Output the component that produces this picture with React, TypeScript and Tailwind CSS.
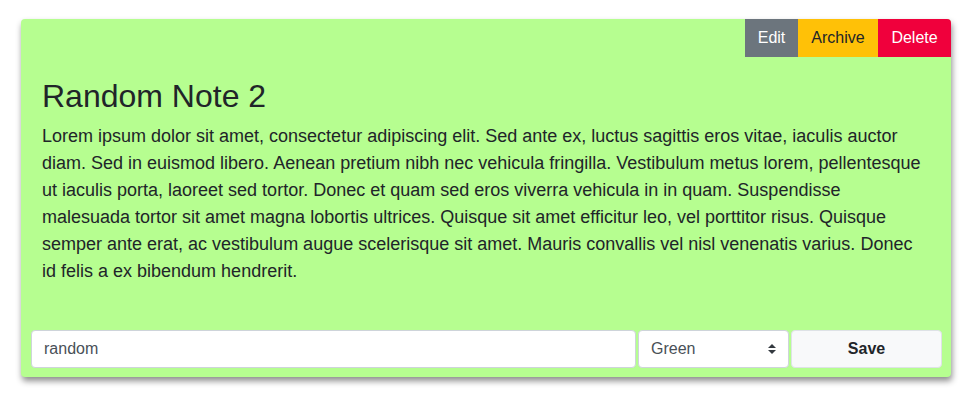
import { useState } from "react";

const body =
  "Lorem ipsum dolor sit amet, consectetur adipiscing elit. Sed ante ex, luctus sagittis eros vitae, iaculis auctor diam. Sed in euismod libero. Aenean pretium nibh nec vehicula fringilla. Vestibulum metus lorem, pellentesque ut iaculis porta, laoreet sed tortor. Donec et quam sed eros viverra vehicula in in quam. Suspendisse malesuada tortor sit amet magna lobortis ultrices. Quisque sit amet efficitur leo, vel porttitor risus. Quisque semper ante erat, ac vestibulum augue scelerisque sit amet. Mauris convallis vel nisl venenatis varius. Donec id felis a ex bibendum hendrerit.";

export default function App() {
  const [tag, setTag] = useState("random");
  const [color, setColor] = useState("Green");

  return (
    <div className="min-h-[407px] bg-white pt-[19px] font-['Liberation_Sans',Arial,sans-serif] text-[#212529]">
      <div className="ml-[21px] flex w-[930px] flex-col rounded-[4px] bg-[#b6fe90] shadow-[1px_4px_6px_rgba(0,0,0,0.45)]">
        <div className="flex justify-end">
          <button className="h-[38px] w-[53px] bg-[#6c757d] text-[16px] text-white">Edit</button>
          <button className="h-[38px] w-[80px] bg-[#ffc107] text-[16px] text-[#212529]">Archive</button>
          <button className="h-[38px] w-[73px] rounded-tr-[4px] bg-[#f0003c] text-[16px] text-white">
            Delete
          </button>
        </div>

        <div className="px-[21px] pt-[20px]">
          <h2 className="mb-[8px] text-[32px] leading-[38px] font-medium">Random Note 2</h2>
          <p className="text-[18px] leading-[27px]">{body}</p>
        </div>

        <div className="mt-[45px] flex gap-[2px] pr-[9px] pb-[9px] pl-[10px]">
          <input
            value={tag}
            onChange={(e) => setTag(e.target.value)}
            className="h-[38px] flex-1 rounded-[4px] border border-[#ced4da] bg-white px-[12px] text-[16px] text-[#495057] outline-none"
          />
          <div className="relative w-[151px]">
            <select
              value={color}
              onChange={(e) => setColor(e.target.value)}
              className="h-[38px] w-full appearance-none rounded-[4px] border border-[#ced4da] bg-white px-[12px] text-[16px] text-[#495057] outline-none"
            >
              <option>Green</option>
              <option>Yellow</option>
              <option>Blue</option>
            </select>
            <svg
              viewBox="0 0 4 5"
              width="8"
              height="10"
              className="pointer-events-none absolute top-[14px] right-[13px]"
            >
              <path fill="#343a40" d="M2 0L0 2h4zm0 5L0 3h4z" />
            </svg>
          </div>
          <button className="h-[38px] w-[151px] rounded-[4px] border border-[#dee2e6] bg-[#f8f9fa] text-[16px] font-bold text-[#212529]">
            Save
          </button>
        </div>
      </div>
    </div>
  );
}
